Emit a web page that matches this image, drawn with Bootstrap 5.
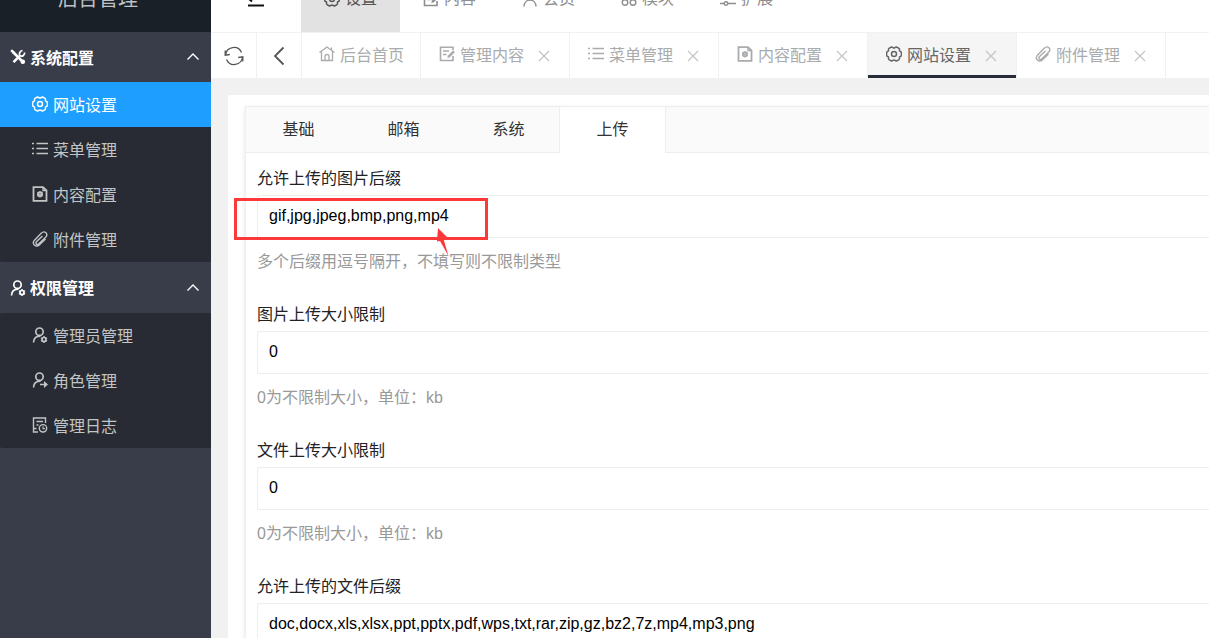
<!DOCTYPE html>
<html lang="zh-CN">
<head>
<meta charset="utf-8">
<meta name="viewport" content="width=device-width, initial-scale=1">
<title>网站设置</title>
<link href="https://cdn.jsdelivr.net/npm/bootstrap@5.3.0/dist/css/bootstrap.min.css" rel="stylesheet">
<style>
  body { font: 16px/24px "Liberation Sans", "Noto Sans CJK SC", sans-serif; color: #222; background: #f1f1f1; }
  a { text-decoration: none; color: inherit; }
  .ico { width: 16px; height: 16px; flex: none; fill: none; stroke: currentColor; stroke-width: 1.4; }

  .sidebar { width: 211px; background: #393d49; }
  .brand-bar { height: 32px; background: #1a2027; color: #bfc1c3; font-size: 20px; }
  .brand-bar a { line-height: 66px; padding-right: 15px; }
  .group-title { height: 50px; padding: 3px 10px 0; gap: 4px; color: #fff; font-weight: 700; border: 0; background: none; }
  ul + .group-title { height: 51px; }
  .group-title + ul { background: #282b33; border-radius: 2px; }
  .group-title .ico, .side-link .ico { margin-bottom: 3px; }
  .side-link { height: 45px; padding: 2px 0 0 32px; gap: 5px; color: #c3c4c6; }
  .side-link.active { background: #1e9fff; color: #fff; }

  .top-bar { height: 32px; background: #fff; color: #8e8e8e; }
  .top-link { width: 99px; height: 66px; gap: 5px; }
  .top-link.active { background: #e2e2e2; color: #555; }
  .menu-toggle { width: 90px; height: 66px; border: 0; background: none; color: #111; }

  .page-tabs { height: 46px; padding-left: 1px; background: #fff; border-top: 1px solid #f1f1f1; color: #a9abad; }
  .tool-btn { width: 45px; border: 0; border-right: 1px solid #f1f1f1; background: none; color: #555; }
  .page-tab { padding: 0 18px; border-right: 1px solid #f1f1f1; }
  .page-tab.home { width: 119px; padding: 0 0 0 17px; }
  .page-tab.closable { width: 149px; padding: 0 19px 0 18px; }
  .page-tab a { gap: 5px; }
  .page-tab a .ico { margin-bottom: 3px; }
  .page-tab.active { background: #f5f5f5; color: #666; box-shadow: inset 0 -3px #282b38; }
  .close-btn { border: 0; background: none; color: #c4c4c4; }
  .close-btn svg { width: 12px; height: 12px; stroke-width: 1.2; }

  .panel { margin: 17px 0 0 17px; padding: 11px 0 0 17px; background: #fff; border-radius: 2px 0 0 0; }
  .settings { border: 1px solid #eee; border-right: 0; box-shadow: 0 2px 5px rgba(0,0,0,.1); }
  .form-tabs { height: 46px; background: #fafafa; border-bottom: 1px solid #eee; }
  .form-tabs button { width: 105px; height: 46px; border: 0; background: none; color: #333; border-radius: 2px 2px 0 0; }
  .form-tabs button.active { width: 107px; margin-left: -2px; background: #fff; border: solid #eee; border-width: 0 1px; }
  .fields { padding-top: 14px; }
  .field { padding-left: 11px; margin-bottom: 29px; }
  .field label { margin-bottom: 4px; }
  .field .form-control { height: 43px; padding: 0 11px 2px; font-size: 16px; color: #000; border: 1px solid #eee; border-right: 0; border-radius: 2px 0 0 2px; }
  .field p { color: #999; margin: 12px 0 0; }
  .mark-box { left: -12px; top: 31px; width: 254px; height: 42px; border: 3px solid #fc3838; pointer-events: none; }
  .mark-arrow { left: 188px; top: 59px; width: 20px; height: 32px; pointer-events: none; }
</style>
</head>
<body>
<svg class="d-none" xmlns="http://www.w3.org/2000/svg">
  <symbol id="tools" viewBox="0 0 16 16"><path d="M3 3l10 10" stroke-width="2.600"/><path d="M1.200 1.200l2.500 2.500M3.500 13.200l6-6" stroke-width="2.600"/><path d="M14.500 3.500c.5 2.500-2 4.500-4.500 3.300C8.500 5 9.800 1.800 12.500 1.700" stroke-width="1.800"/><circle cx="12.800" cy="12.800" r="1.600" fill="currentColor"/></symbol>
  <symbol id="gear" viewBox="0 0 16 16"><path d="M5.400 1Q6.500 1 7 1.700 8 2.500 9 1.700 9.500 1 10.600 1L13 2.400Q13.800 3 13.400 4.100 13.300 5.300 14.400 5.500 15.400 5.900 15.400 7V9Q15.400 10.100 14.400 10.500 13.300 10.700 13.400 11.900 13.800 13 13 13.600L10.600 15Q9.500 15 9 14.300 8 13.500 7 14.300 6.500 15 5.400 15L3 13.600Q2.200 13 2.600 11.900 2.700 10.700 1.600 10.500.6 10.100.6 9V7Q.6 5.900 1.600 5.500 2.700 5.300 2.600 4.100 2.200 3 3 2.400z" stroke-width="1.500"/><circle cx="8" cy="8" r="2.500" stroke-width="1.500"/></symbol>
  <symbol id="list" viewBox="0 0 16 16"><path d="M4.500 2.500H16M4.500 7.500H16M4.500 12.500H16M0 2.500h2M0 7.500h2M0 12.500h2"/></symbol>
  <symbol id="filegear" viewBox="0 0 16 16"><path d="M1.500 1.200h9.500l3.500 3.300v10.300h-13z" stroke-width="1.800"/><path d="M11 1v3.500h3.500"/><circle cx="8" cy="8.300" r="2.100" stroke-width="1.800"/><path d="M8 5v6.600M5.200 6.700l5.600 3.200M10.800 6.700L5.200 9.900" stroke-width=".8"/></symbol>
  <symbol id="clip" viewBox="0 0 16 16"><path d="M13.500 8l-5.800 5.600c-4 3.500-8.500-.7-5-4.700l6.500-6.700c3.600-3.200 7.500.7 4.400 4l-6.400 6.300c-2.400 2-4.300-.2-2.600-2L10.500 5"/></symbol>
  <symbol id="usergear" viewBox="0 0 16 16"><circle cx="7.500" cy="4.700" r="3.700" stroke-width="1.700"/><path d="M1.500 15.500c.2-4 2.600-6.300 7-6.300" stroke-width="1.700"/><circle cx="12" cy="12.500" r="2" stroke-width="1.700"/><path d="M12 9v1M12 15v1M9 10.800l1 .6M14 13.600l1 .6M15 10.800l-1 .6M10 13.600l-1 .6"/></symbol>
  <symbol id="userarrow" viewBox="0 0 16 16"><circle cx="7.500" cy="4.700" r="3.700" stroke-width="1.700"/><path d="M1.500 15.500c.2-4 2.600-6.300 7-6.300M8 12.500h6" stroke-width="1.700"/><path d="M12 9l4 3.500-4 3.500z" fill="currentColor" stroke="none"/></symbol>
  <symbol id="log" viewBox="0 0 16 16"><path d="M6 15H1.500V1h12v5M4.500 4.500h6.500M4.500 8h2M1.500 11.500h3"/><circle cx="11" cy="11.300" r="3.700"/><path d="M11 9.300v2.300h2" stroke-width="1.100"/></symbol>
  <symbol id="home" viewBox="0 0 16 16"><path d="M.5 6.500L8 1l7.500 5.500M2.500 5.500v9h11v-9M12.500 4V1.500M6 14.500V10c0-2 4-2 4 0v4.500" stroke-width="1.300"/></symbol>
  <symbol id="edit" viewBox="0 0 16 16"><path d="M14 10v4.500H1.500V1.300h12.500V4M4 5h6M4 8.500h3.500" stroke-width="1.600"/><path d="M8.500 11.800l.6-2.200 5-5 1.600 1.600-5 5z" fill="currentColor" stroke-width=".3"/></symbol>
  <symbol id="user" viewBox="0 0 16 16"><circle cx="8" cy="5" r="3.700"/><path d="M2 15.500c.3-8.500 11.700-8.500 12 0"/></symbol>
  <symbol id="modules" viewBox="0 0 16 16"><circle cx="4" cy="4" r="2.800"/><circle cx="12" cy="4" r="2.800"/><circle cx="4" cy="11.500" r="2.800"/><circle cx="12" cy="11.500" r="2.800"/></symbol>
  <symbol id="sliders" viewBox="0 0 16 16"><path d="M0 5h8M12 5h4M0 12.500h4M8 12.500h8"/><circle cx="10" cy="5" r="1.800"/><circle cx="6" cy="12.500" r="1.800"/></symbol>
  <symbol id="x" viewBox="0 0 12 12"><path d="M1 1l10 10M11 1L1 11"/></symbol>
  <symbol id="up" viewBox="0 0 16 16"><path d="M2.500 10.500L8 5l5.500 5.500"/></symbol>
</svg>

<div class="d-flex vh-100 overflow-hidden">
  <aside class="sidebar flex-shrink-0">
    <div class="brand-bar d-flex justify-content-center align-items-end overflow-hidden"><a href="#">后台管理</a></div>
    <nav>
      <button class="group-title d-flex align-items-center w-100" type="button"><svg class="ico"><use href="#tools"/></svg>系统配置<svg class="ico ms-auto"><use href="#up"/></svg></button>
      <ul class="list-unstyled mb-0">
        <li><a class="side-link active d-flex align-items-center" href="#"><svg class="ico"><use href="#gear"/></svg>网站设置</a></li>
        <li><a class="side-link d-flex align-items-center" href="#"><svg class="ico"><use href="#list"/></svg>菜单管理</a></li>
        <li><a class="side-link d-flex align-items-center" href="#"><svg class="ico"><use href="#filegear"/></svg>内容配置</a></li>
        <li><a class="side-link d-flex align-items-center" href="#"><svg class="ico"><use href="#clip"/></svg>附件管理</a></li>
      </ul>
      <button class="group-title d-flex align-items-center w-100" type="button"><svg class="ico"><use href="#usergear"/></svg>权限管理<svg class="ico ms-auto"><use href="#up"/></svg></button>
      <ul class="list-unstyled mb-0">
        <li><a class="side-link d-flex align-items-center" href="#"><svg class="ico"><use href="#usergear"/></svg>管理员管理</a></li>
        <li><a class="side-link d-flex align-items-center" href="#"><svg class="ico"><use href="#userarrow"/></svg>角色管理</a></li>
        <li><a class="side-link d-flex align-items-center" href="#"><svg class="ico"><use href="#log"/></svg>管理日志</a></li>
      </ul>
    </nav>
  </aside>

  <div class="flex-grow-1 overflow-hidden">
    <header class="top-bar d-flex align-items-end overflow-hidden">
      <button class="menu-toggle d-flex align-items-center justify-content-center" type="button" aria-label="menu"><svg class="ico" viewBox="0 0 16 16"><path d="M0 2h16M6 8h10M0 14.500h16M4 5.500L1 8l3 2.500" stroke-width="2"/></svg></button>
      <a class="top-link active d-flex align-items-center justify-content-center" href="#"><svg class="ico"><use href="#gear"/></svg>设置</a>
      <a class="top-link d-flex align-items-center justify-content-center" href="#"><svg class="ico"><use href="#edit"/></svg>内容</a>
      <a class="top-link d-flex align-items-center justify-content-center" href="#"><svg class="ico"><use href="#user"/></svg>会员</a>
      <a class="top-link d-flex align-items-center justify-content-center" href="#"><svg class="ico"><use href="#modules"/></svg>模块</a>
      <a class="top-link d-flex align-items-center justify-content-center" href="#"><svg class="ico"><use href="#sliders"/></svg>扩展</a>
    </header>

    <div class="page-tabs d-flex">
      <button class="tool-btn flex-shrink-0 p-0" type="button" aria-label="refresh"><svg width="20" height="20" viewBox="0 0 20 20" fill="none" stroke="currentColor" stroke-width="1.300"><path d="M1.500 9C2.500 .5 14-1.500 17.500 6.500M18.500 11c-1 8.500-12.500 10.500-16 2.500M1.200 4.500v4.700l4.600-.7M18.800 15.500v-4.700l-4.600.7"/></svg></button>
      <button class="tool-btn flex-shrink-0 p-0" type="button" aria-label="back"><svg width="20" height="20" viewBox="0 0 20 20" fill="none" stroke="currentColor" stroke-width="1.800"><path d="M14.500 1.500L6 10l8.500 8.500"/></svg></button>
      <div class="page-tab home d-flex align-items-center flex-shrink-0"><a class="d-flex align-items-center" href="#"><svg class="ico"><use href="#home"/></svg>后台首页</a></div>
      <div class="page-tab closable d-flex align-items-center justify-content-between flex-shrink-0"><a class="d-flex align-items-center" href="#"><svg class="ico"><use href="#edit"/></svg>管理内容</a><button class="close-btn d-flex p-0" type="button" aria-label="close"><svg class="ico"><use href="#x"/></svg></button></div>
      <div class="page-tab closable d-flex align-items-center justify-content-between flex-shrink-0"><a class="d-flex align-items-center" href="#"><svg class="ico"><use href="#list"/></svg>菜单管理</a><button class="close-btn d-flex p-0" type="button" aria-label="close"><svg class="ico"><use href="#x"/></svg></button></div>
      <div class="page-tab closable d-flex align-items-center justify-content-between flex-shrink-0"><a class="d-flex align-items-center" href="#"><svg class="ico"><use href="#filegear"/></svg>内容配置</a><button class="close-btn d-flex p-0" type="button" aria-label="close"><svg class="ico"><use href="#x"/></svg></button></div>
      <div class="page-tab closable active d-flex align-items-center justify-content-between flex-shrink-0"><a class="d-flex align-items-center" href="#"><svg class="ico"><use href="#gear"/></svg>网站设置</a><button class="close-btn d-flex p-0" type="button" aria-label="close"><svg class="ico"><use href="#x"/></svg></button></div>
      <div class="page-tab closable d-flex align-items-center justify-content-between flex-shrink-0"><a class="d-flex align-items-center" href="#"><svg class="ico"><use href="#clip"/></svg>附件管理</a><button class="close-btn d-flex p-0" type="button" aria-label="close"><svg class="ico"><use href="#x"/></svg></button></div>
    </div>

    <main class="panel">
      <form class="settings">
        <div class="form-tabs d-flex">
          <button type="button">基础</button><button type="button">邮箱</button><button type="button">系统</button><button class="active" type="button">上传</button>
        </div>
        <div class="fields">
          <div class="field position-relative">
            <label class="d-block" for="imgExt">允许上传的图片后缀</label>
            <input class="form-control" id="imgExt" type="text" value="gif,jpg,jpeg,bmp,png,mp4">
            <p>多个后缀用逗号隔开，不填写则不限制类型</p>
            <div class="mark-box position-absolute"></div>
            <svg class="mark-arrow position-absolute" viewBox="0 0 20 32"><path d="M4 2L13 11 9.500 13 14.500 30 6 15 3 15.500z" fill="#fc3838"/></svg>
          </div>
          <div class="field">
            <label class="d-block" for="imgSize">图片上传大小限制</label>
            <input class="form-control" id="imgSize" type="text" value="0">
            <p>0为不限制大小，单位：kb</p>
          </div>
          <div class="field">
            <label class="d-block" for="fileSize">文件上传大小限制</label>
            <input class="form-control" id="fileSize" type="text" value="0">
            <p>0为不限制大小，单位：kb</p>
          </div>
          <div class="field">
            <label class="d-block" for="fileExt">允许上传的文件后缀</label>
            <input class="form-control" id="fileExt" type="text" value="doc,docx,xls,xlsx,ppt,pptx,pdf,wps,txt,rar,zip,gz,bz2,7z,mp4,mp3,png">
          </div>
        </div>
      </form>
    </main>
  </div>
</div>
<script src="https://cdn.jsdelivr.net/npm/bootstrap@5.3.0/dist/js/bootstrap.bundle.min.js"></script>
</body>
</html>
